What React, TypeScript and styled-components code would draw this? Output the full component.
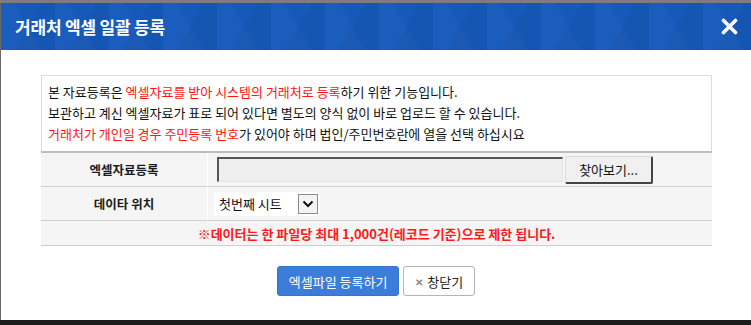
import styled, { createGlobalStyle } from 'styled-components';

const GlobalStyle = createGlobalStyle`
  html, body {
    margin: 0;
    padding: 0;
    background: #ffffff;
  }
  body {
    font-family: "Noto Sans CJK KR", "Noto Sans", sans-serif;
    font-size: 13px;
    color: #222;
  }
`;

const Screen = styled.div`
  width: 751px;
  height: 325px;
  display: flex;
  flex-direction: column;
  overflow: hidden;
`;

const TopStrip = styled.div`
  height: 3px;
  background: #7d7d7d;
`;

const BottomStrip = styled.div`
  height: 5px;
  background: #1b1b1b;
`;

const Dialog = styled.div`
  flex: 1;
  display: flex;
  flex-direction: column;
  background: #fff;
  border-left: 1px solid #6a6a6a;
`;

// faint triangle texture like the original header image
const Header = styled.div`
  height: 47px;
  display: flex;
  align-items: center;
  justify-content: space-between;
  padding: 0 12px 0 14px;
  background-color: #1659ba;
  background-image:
    linear-gradient(120deg, transparent 50%, rgba(0, 0, 0, 0.035) 50%),
    linear-gradient(60deg, rgba(255, 255, 255, 0.025) 50%, transparent 50%);
  background-size: 54px 47px;
`;

const Title = styled.h1`
  margin: 0;
  font-size: 17px;
  font-weight: 700;
  color: #fff;
  letter-spacing: -0.2px;
`;

const CloseButton = styled.button`
  border: 0;
  background: none;
  padding: 0;
  width: 20px;
  height: 20px;
  display: flex;
  align-items: center;
  justify-content: center;
  cursor: pointer;
`;

const Body = styled.div`
  padding: 25px 39px 0 40px;
  display: flex;
  flex-direction: column;
`;

const InfoBox = styled.div`
  border: 1px solid #dcdcdc;
  border-bottom: 0;
  padding: 5px 6px 7px;
  font-size: 13px;
  line-height: 21px;
  color: #111;
`;

const Hl = styled.span`
  color: #ff1414;
`;

const FormTable = styled.div`
  display: grid;
  grid-template-columns: 167px 1fr;
  border-top: 2px solid #bdbdbd;
  background: #f5f5f5;
`;

const Label = styled.div`
  height: 33px;
  display: flex;
  align-items: center;
  justify-content: center;
  font-weight: 700;
  font-size: 12.5px;
  color: #1a1a1a;
  border-bottom: 1px solid #cfcfcf;
  border-right: 1px solid #fff;
`;

const Value = styled.div`
  height: 33px;
  display: flex;
  align-items: center;
  padding-left: 6px;
  border-bottom: 1px solid #cfcfcf;
`;

const FileField = styled.div`
  width: 343px;
  height: 22px;
  margin-left: 3px;
  background: #efefef;
  border: 1px solid #e3e3e3;
  border-top: 2px solid #555;
  border-left: 2px solid #555;
`;

const BrowseButton = styled.button`
  height: 28px;
  width: 88px;
  margin-left: 2px;
  font-family: inherit;
  font-size: 13px;
  color: #111;
  background: #f0f0f0;
  border: 1px solid #dadada;
  border-right: 2px solid #444;
  border-bottom: 2px solid #444;
  border-radius: 2px;
`;

const SelectBox = styled.div`
  height: 24px;
  width: 106px;
  background: #fff;
  display: flex;
  align-items: center;
  justify-content: space-between;
  padding: 0 2px 0 5px;
  box-sizing: border-box;
  font-size: 13px;
  color: #111;
`;

const SelectArrow = styled.div`
  width: 18px;
  height: 18px;
  border: 1px solid #8a8a8a;
  background: #f4f4f4;
  display: flex;
  align-items: center;
  justify-content: center;
`;

const Notice = styled.div`
  grid-column: 1 / 3;
  height: 24px;
  display: flex;
  align-items: center;
  justify-content: center;
  color: #ff1a1a;
  font-size: 13px;
  font-weight: 700;
  border-bottom: 1px solid #cfcfcf;
`;

const Actions = styled.div`
  display: flex;
  justify-content: center;
  gap: 4px;
  margin-top: 20px;
  padding-right: 1px;
`;

const Button = styled.button<{ $primary?: boolean }>`
  height: 30px;
  padding: 0 11px;
  font-family: inherit;
  font-size: 13px;
  border-radius: 3px;
  display: flex;
  align-items: center;
  gap: 4px;
  cursor: pointer;
  color: ${(p) => (p.$primary ? '#fff' : '#222')};
  background: ${(p) => (p.$primary ? '#3b7dd8' : '#fff')};
  border: 1px solid ${(p) => (p.$primary ? '#3674cc' : '#b5b5b5')};
`;

const XMark = styled.span`
  color: #888;
  font-size: 10px;
  font-weight: 700;
`;

const App = () => {
  return (
    <>
      <GlobalStyle />
      <Screen>
        <TopStrip />
        <Dialog>
          <Header>
            <Title>거래처 엑셀 일괄 등록</Title>
            <CloseButton aria-label="닫기">
              <svg width="17" height="17" viewBox="0 0 17 17">
                <path d="M2.5 2.5 L14.5 14.5 M14.5 2.5 L2.5 14.5" stroke="#fff" strokeWidth="3.6" strokeLinecap="round" />
              </svg>
            </CloseButton>
          </Header>
          <Body>
            <InfoBox>
              <div>
                본 자료등록은 <Hl>엑셀자료를 받아 시스템의 거래처로 등록</Hl>하기 위한 기능입니다.
              </div>
              <div>보관하고 계신 엑셀자료가 표로 되어 있다면 별도의 양식 없이 바로 업로드 할 수 있습니다.</div>
              <div>
                <Hl>거래처가 개인일 경우 주민등록 번호</Hl>가 있어야 하며 법인/주민번호란에 열을 선택 하십시요
              </div>
            </InfoBox>
            <FormTable>
              <Label>엑셀자료등록</Label>
              <Value>
                <FileField />
                <BrowseButton>찾아보기...</BrowseButton>
              </Value>
              <Label>데이타 위치</Label>
              <Value>
                <SelectBox>
                  첫번째 시트
                  <SelectArrow>
                    <svg width="12" height="8" viewBox="0 0 12 8">
                      <path d="M1.5 1.5 L6 6 L10.5 1.5" fill="none" stroke="#111" strokeWidth="2" />
                    </svg>
                  </SelectArrow>
                </SelectBox>
              </Value>
              <Notice>※데이터는 한 파일당 최대 1,000건(레코드 기준)으로 제한 됩니다.</Notice>
            </FormTable>
            <Actions>
              <Button $primary>엑셀파일 등록하기</Button>
              <Button>
                <XMark>✕</XMark>창닫기
              </Button>
            </Actions>
          </Body>
        </Dialog>
        <BottomStrip />
      </Screen>
    </>
  );
};

export default App;
